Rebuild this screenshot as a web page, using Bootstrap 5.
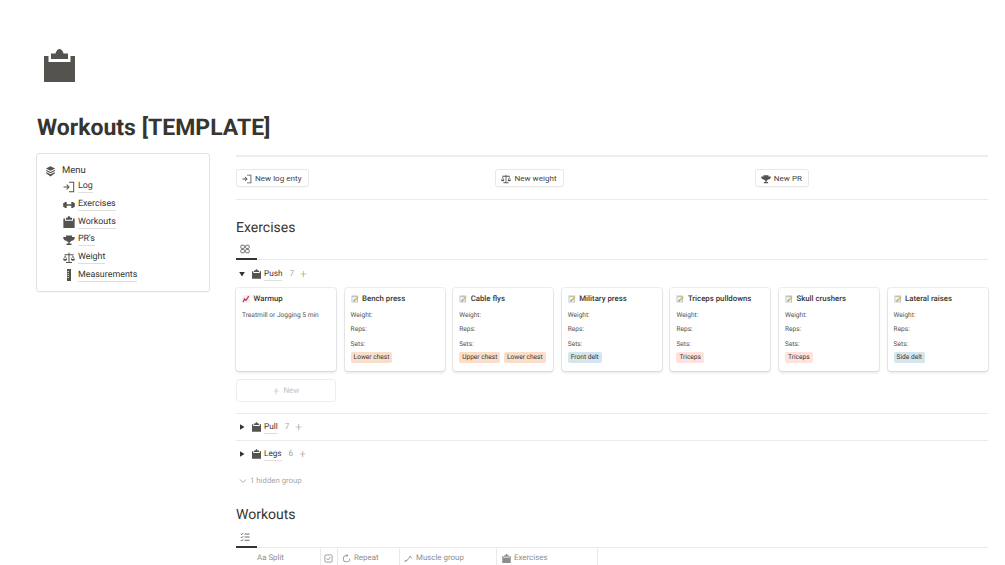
<!DOCTYPE html>
<html lang="en">
<head>
<meta charset="utf-8">
<title>Workouts [TEMPLATE]</title>
<link rel="stylesheet" href="https://cdn.jsdelivr.net/npm/bootstrap@5.3.0/dist/css/bootstrap.min.css">
<style>
html,body{height:565px;overflow:hidden;background:#fff}
body{font-family:Roboto,"Open Sans",sans-serif;color:#37352f;font-size:9.5px;padding:49px 17px 0 36px;text-rendering:geometricPrecision}
.ico{fill:#55534e;display:block;flex:none}
.page-ico{width:31px;height:33px;margin-left:8px}
.page-title{font-size:23px;font-weight:700;line-height:30px;margin:31px 0 0 1px;color:#37352f}
.layout{display:flex;margin-top:10px}
.side{width:174px;height:139px;flex:none;border:1px solid #e3e2e0;border-radius:3px;box-shadow:0 1px 1px rgba(15,15,15,.04);padding:10px 8px 0 8px;margin-right:26px}
.menu-head{display:flex;align-items:center;line-height:14px;height:14px}
.menu-head .ico{width:11px;height:11px;margin-right:6px}
.menu-list{list-style:none;margin:0;padding:0 0 0 18px;font-size:8.9px}
.menu-list li{height:17.7px;display:flex;align-items:center}
.menu-list .ico{width:12px;height:12px;margin-right:3px}
.lnk{border-bottom:1px solid #dfdedb;line-height:11px;font-weight:400;padding-top:1px}
.main{flex:1;min-width:0;padding-top:2px}
.rule{height:1px;background:#ebeaea;border:0;margin:0;opacity:1}
.rule-2{height:2px;background:#efeeed}
.actions{display:grid;grid-template-columns:repeat(3,259.4px);height:42px;align-items:center}
.act{display:inline-flex;align-items:center;height:18px;border:1px solid #e9e8e6;border-radius:3px;padding:1px 6px 0 5px;font-size:8.1px;font-weight:400;color:#46443f;background:#fff;box-shadow:0 1px 1px rgba(15,15,15,.03);justify-self:start}
.act .ico{width:10px;height:10px;margin-right:3px}
.sec-title{font-size:14px;font-weight:400;line-height:20px;margin:0;color:#37352f}
.ex-title{margin-top:18px}
.tabbar{height:22px;position:relative;border-bottom:1px solid #ebeaea;display:flex;align-items:center}
.tabbar .ico{width:10px;height:10px;margin-left:4px;margin-top:1px;fill:none;stroke:#55534e}
.tab-mark{position:absolute;left:0;bottom:-1px;width:21px;height:2px;background:#37352f}
.grp{display:flex;align-items:center;font-size:8.2px;height:26px;color:#37352f}
.grp-a{height:27px}
.grp .tri{width:6px;height:6px;margin-left:3px;margin-right:7px;fill:#37352f;flex:none}
.grp .ico{width:9px;height:10px;margin-right:3px}
.grp .lnk{padding-top:2px}
.cnt{color:#a4a29e;font-weight:400;margin-left:7px;padding-top:1px}
.plus{color:#a4a29e;font-weight:300;font-size:12px;margin-left:6px;line-height:10px}
.cards{display:grid;grid-template-columns:repeat(7,100px);column-gap:8.6px;margin-top:1px}
.tile{height:83px;background:#fff;border-radius:3px;box-shadow:0 0 0 1px rgba(15,15,15,.07),0 2px 3px rgba(15,15,15,.1);padding:5px 6px 0 6px}
.tile-h{display:flex;align-items:center;font-size:7.8px;font-weight:500;line-height:12px;color:#37352f;height:12px;margin-bottom:3px;white-space:nowrap}
.tile-h svg{width:8px;height:8px;margin-right:3.5px;flex:none}
.tile-note{font-size:6.6px;line-height:10px;color:#55534e;padding-top:2px;white-space:nowrap}
.fld{font-size:6.6px;color:#55534e;line-height:10px;height:14.4px;padding-top:2px}
.tags{display:flex;gap:3.500px;margin-top:1px}
.tag{font-size:6.6px;line-height:11px;padding:0 3px;border-radius:2px;color:#37352f;white-space:nowrap}
.t-o{background:#fadec9}.t-b{background:#d3e5ef}.t-r{background:#ffe2dd}
.newcard{width:100px;height:23px;margin-top:8px;border:1px solid #efeeed;border-radius:3px;display:flex;align-items:center;justify-content:center;color:#c4c3c0;font-size:8px;gap:4px;padding-top:1px}
.newcard span{font-size:12px;font-weight:300;line-height:10px}
.sp1{margin-top:11px}
.hidden-grp{display:flex;align-items:center;color:#a9a7a3;font-size:7.8px;height:14px;margin-top:7px;padding-left:3px;gap:3px}
.hidden-grp svg{width:8px;height:8px;fill:none;stroke:#a9a7a3}
.wk-title{margin-top:17px}
.tabbar2{height:23px}
.thead{display:flex;height:19px;align-items:flex-start;color:#8f8d89;font-size:7.9px}
.th{height:19px;display:flex;align-items:center;border-right:1px solid #ebeaea;flex:none;padding-top:1px}
.th .ico{width:9px;height:9px;margin-right:3px;fill:#8f8d89}
.th-a{width:85px;padding-left:21px}
.th-b{width:17px;padding-left:3px}
.th-c{width:62px;padding-left:4px}
.th-d{width:97px;padding-left:4px}
.th-e{width:101px;padding-left:5px}
</style>
</head>
<body>
<svg width="0" height="0" class="position-absolute">
  <defs>
    <symbol id="clip" viewBox="0 0 31 33"><path d="M7 4.500h4.500C12 2 14 0 15.500 0S19 2 19.500 4.500H24V10H7zM0 7h4.500v6h22V7H31v26H0z"/></symbol>
    <symbol id="stack" viewBox="0 0 12 12"><path d="M6 .3l5 2.500-5 2.500-5-2.500zM1.800 4.400L6 6.500l4.200-2.100 1 .8L6 7.900.8 5.200zM1.800 6.900L6 9l4.200-2.100 1 .8L6 11.500.8 7.700z"/></symbol>
    <symbol id="login" viewBox="0 0 12 12"><path d="M6 .8h5.200v10.400H6v-1h4.200V1.800H6zM.5 5.500h4.300L3.300 4l.7-.7L6.700 6 4 8.700 3.300 8l1.500-1.500H.5z"/></symbol>
    <symbol id="dumb" viewBox="0 0 12 12"><path d="M.2 4h1.300V3h2.200v2.300h4.600V3h2.200v1h1.300v4h-1.300v1H8.300V6.700H3.700V9H1.500V8H.2z"/></symbol>
    <symbol id="scale" viewBox="0 0 12 12"><path d="M5.500 .8h1v1.400h4v1h-.6l1.900 4c0 1-1 1.600-1.900 1.600S8 8.200 8 7.200l1.900-4H6.500V10H9v1H3v-1h2.500V3.200H2.100l1.900 4c0 1-1 1.600-1.900 1.600S.2 8.200.2 7.200l1.900-4H1.500v-1h4zM2.100 4.500L1 7h2.200zM9.900 4.500L8.800 7H11z"/></symbol>
    <symbol id="trophy" viewBox="0 0 12 12"><path d="M3 1.500h6V3h2.800c0 2.500-1.200 3.500-3.200 3.700C8 7.500 7.200 7.900 6.700 8v1.500H8.500V11h-5V9.500h1.800V8c-.5-.1-1.300-.5-1.900-1.300C1.400 6.500.2 5.500.2 3H3z"/></symbol>
    <symbol id="ruler" viewBox="0 0 12 12"><path d="M4 0h4v12H4zM4.500 2v.8H6V2zM4.500 4v.8H6V4zM4.500 6v.8H6V6zM4.500 8v.8H6V8z" fill-rule="evenodd"/></symbol>
    <symbol id="repeat" viewBox="0 0 12 12"><path d="M6 1.500V0l2.500 2L6 4V2.500A3.800 3.800 0 1 0 9.800 6h1A4.800 4.800 0 1 1 6 1.500z"/></symbol>
    <symbol id="muscle" viewBox="0 0 12 12"><path d="M.5 9.500L2 8l1 .7L7 4.500 6.500 4 8 2.500l1 .5 2 2.500-.7.6L8.500 4 4 9.300l-1 .4-1.500 1z"/></symbol>
    <symbol id="grid4" viewBox="0 0 12 12"><rect x="1" y="1.500" width="4.300" height="3.800" rx="1"/><rect x="6.700" y="1.500" width="4.300" height="3.800" rx="1"/><rect x="1" y="6.700" width="4.300" height="3.800" rx="1"/><rect x="6.700" y="6.700" width="4.300" height="3.800" rx="1"/></symbol>
    <symbol id="checks" viewBox="0 0 12 12"><path d="M1 2.200l1 1 1.800-2M1 6l1 1 1.800-2M1 9.800l1 1 1.800-2M5.500 2.500H11.500M5.500 6H11.500M5.500 10H11.500" stroke-width="1"/></symbol>
    <symbol id="memo" viewBox="0 0 8 8"><rect x=".5" y=".5" width="6.500" height="7" fill="#b9c4d0"/><rect x="1.300" y="2" width="4.500" height="4.800" fill="#eef1f4"/><path d="M2.500 6.500l.4-1.500L6.500 1.300l1.200 1L4 6z" fill="#e8b93c"/><path d="M2.500 6.500l.4-1.500 1.100 1z" fill="#6b5b3a"/></symbol>
    <symbol id="chart" viewBox="0 0 8 8"><rect x=".3" y=".3" width="7.400" height="7.400" fill="#eceef2"/><path d="M1 7l1.500-3L4 5.300 6.800 1" fill="none" stroke="#d8304a" stroke-width="1.300"/></symbol>
    <symbol id="tri-d" viewBox="0 0 6 6"><path d="M.2 1h5.600L3 5.500z"/></symbol>
    <symbol id="tri-r" viewBox="0 0 6 6"><path d="M1 .2L5.500 3 1 5.800z"/></symbol>
  </defs>
</svg>

<svg class="ico page-ico"><use href="#clip"/></svg>
<h1 class="page-title">Workouts [TEMPLATE]</h1>

<div class="layout">
  <aside class="side">
    <div class="menu-head"><svg class="ico"><use href="#stack"/></svg>Menu</div>
    <ul class="menu-list">
      <li><svg class="ico"><use href="#login"/></svg><span class="lnk">Log</span></li>
      <li><svg class="ico"><use href="#dumb"/></svg><span class="lnk">Exercises</span></li>
      <li><svg class="ico"><use href="#clip"/></svg><span class="lnk">Workouts</span></li>
      <li><svg class="ico"><use href="#trophy"/></svg><span class="lnk">PR's</span></li>
      <li><svg class="ico"><use href="#scale"/></svg><span class="lnk">Weight</span></li>
      <li><svg class="ico"><use href="#ruler"/></svg><span class="lnk">Measurements</span></li>
    </ul>
  </aside>

  <main class="main">
    <hr class="rule rule-2">
    <div class="actions">
      <button type="button" class="act"><svg class="ico"><use href="#login"/></svg>New log enty</button>
      <button type="button" class="act"><svg class="ico"><use href="#scale"/></svg>New weight</button>
      <button type="button" class="act"><svg class="ico"><use href="#trophy"/></svg>New PR</button>
    </div>
    <hr class="rule">

    <h2 class="sec-title ex-title">Exercises</h2>
    <div class="tabbar"><svg class="ico"><use href="#grid4"/></svg><span class="tab-mark"></span></div>

    <div class="grp grp-a"><svg class="tri"><use href="#tri-d"/></svg><svg class="ico"><use href="#clip"/></svg><span class="lnk">Push</span><span class="cnt">7</span><span class="plus">+</span></div>

    <div class="cards">
      <div class="tile">
        <div class="tile-h"><svg><use href="#chart"/></svg>Warmup</div>
        <div class="tile-note">Treatmill or Jogging 5 min</div>
      </div>
      <div class="tile">
        <div class="tile-h"><svg><use href="#memo"/></svg>Bench press</div>
        <div class="fld">Weight:</div><div class="fld">Reps:</div><div class="fld">Sets:</div>
        <div class="tags"><span class="tag t-o">Lower chest</span></div>
      </div>
      <div class="tile">
        <div class="tile-h"><svg><use href="#memo"/></svg>Cable flys</div>
        <div class="fld">Weight:</div><div class="fld">Reps:</div><div class="fld">Sets:</div>
        <div class="tags"><span class="tag t-o">Upper chest</span><span class="tag t-o">Lower chest</span></div>
      </div>
      <div class="tile">
        <div class="tile-h"><svg><use href="#memo"/></svg>Military press</div>
        <div class="fld">Weight:</div><div class="fld">Reps:</div><div class="fld">Sets:</div>
        <div class="tags"><span class="tag t-b">Front delt</span></div>
      </div>
      <div class="tile">
        <div class="tile-h"><svg><use href="#memo"/></svg>Triceps pulldowns</div>
        <div class="fld">Weight:</div><div class="fld">Reps:</div><div class="fld">Sets:</div>
        <div class="tags"><span class="tag t-r">Triceps</span></div>
      </div>
      <div class="tile">
        <div class="tile-h"><svg><use href="#memo"/></svg>Skull crushers</div>
        <div class="fld">Weight:</div><div class="fld">Reps:</div><div class="fld">Sets:</div>
        <div class="tags"><span class="tag t-r">Triceps</span></div>
      </div>
      <div class="tile">
        <div class="tile-h"><svg><use href="#memo"/></svg>Lateral raises</div>
        <div class="fld">Weight:</div><div class="fld">Reps:</div><div class="fld">Sets:</div>
        <div class="tags"><span class="tag t-b">Side delt</span></div>
      </div>
    </div>
    <div class="newcard"><span>+</span>New</div>

    <hr class="rule sp1">
    <div class="grp"><svg class="tri"><use href="#tri-r"/></svg><svg class="ico"><use href="#clip"/></svg><span class="lnk">Pull</span><span class="cnt">7</span><span class="plus">+</span></div>
    <hr class="rule">
    <div class="grp"><svg class="tri"><use href="#tri-r"/></svg><svg class="ico"><use href="#clip"/></svg><span class="lnk">Legs</span><span class="cnt">6</span><span class="plus">+</span></div>
    <div class="hidden-grp"><svg viewBox="0 0 8 8"><path d="M1 2.500l3 3 3-3"/></svg>1 hidden group</div>

    <h2 class="sec-title wk-title">Workouts</h2>
    <div class="tabbar tabbar2"><svg class="ico"><use href="#checks"/></svg><span class="tab-mark"></span></div>
    <div class="thead">
      <div class="th th-a">Aa Split</div>
      <div class="th th-b"><svg width="9" height="9" viewBox="0 0 9 9" fill="none" stroke="#8f8d89" stroke-width=".8"><rect x=".9" y=".9" width="7.200" height="7.200" rx="1"/><path d="M2.500 4.500l1.500 1.500 2.500-3"/></svg></div>
      <div class="th th-c"><svg class="ico"><use href="#repeat"/></svg>Repeat</div>
      <div class="th th-d"><svg class="ico"><use href="#muscle"/></svg>Muscle group</div>
      <div class="th th-e"><svg class="ico"><use href="#clip"/></svg>Exercises</div>
    </div>
  </main>
</div>
<script src="https://cdn.jsdelivr.net/npm/bootstrap@5.3.0/dist/js/bootstrap.bundle.min.js"></script>
</body>
</html>
